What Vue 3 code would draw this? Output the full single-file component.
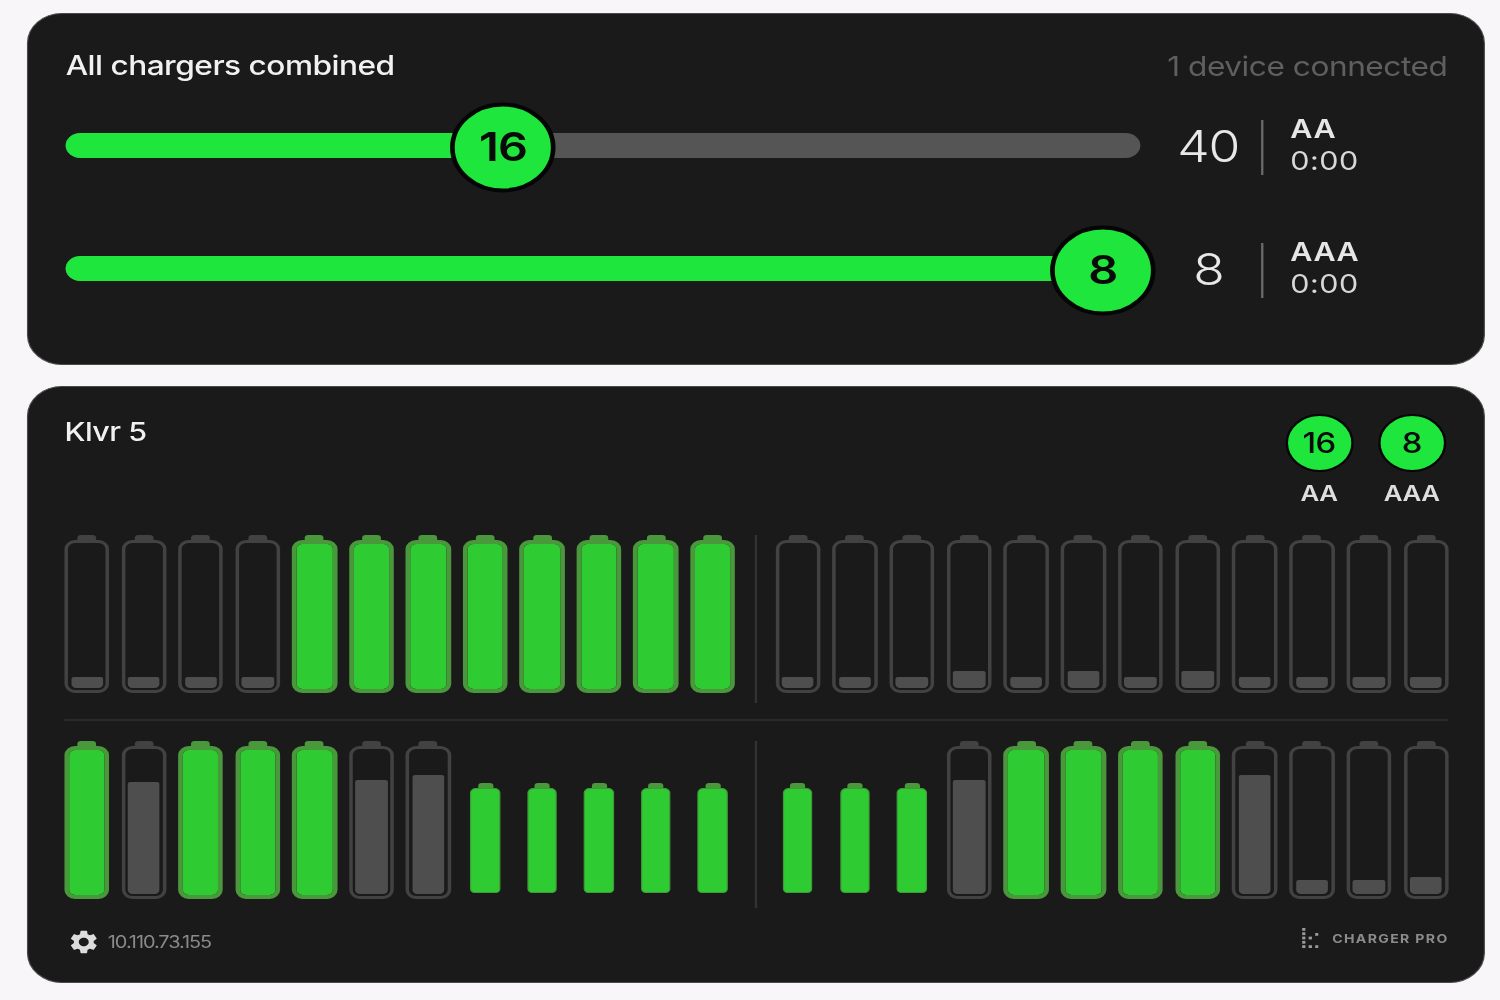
<script setup>
const F = 'full'
const S = 'small'
const sliders = [
  { value: 16, total: 40, pos: 40.7, label: 'AA', time: '0:00' },
  { value: 8, total: 8, pos: 96.5, label: 'AAA', time: '0:00' },
]
const rows = [
  {
    left: [11, 11, 11, 11, F, F, F, F, F, F, F, F],
    right: [11, 11, 11, 17, 11, 17, 11, 17, 11, 11, 11, 11],
  },
  {
    left: [F, 112, F, F, F, 114, 119, S, S, S, S, S],
    right: [S, S, S, 114, F, F, F, F, 119, 14, 14, 17],
  },
]
const counts = [
  { value: 16, label: 'AA' },
  { value: 8, label: 'AAA' },
]
const dots = [
  [0, 0], [0, 4.3], [0, 8.6], [0, 12.9], [0, 17.2],
  [5.6, 8.6], [5.6, 17.2], [11.2, 5], [11.2, 17.2],
]
</script>

<template>
  <div class="stage">
    <section class="card combined">
      <header class="head">
        <h2 class="title">All chargers combined</h2>
        <span class="status">1 device connected</span>
      </header>
      <div class="sliders">
        <div v-for="s in sliders" :key="s.label" class="slider-row">
          <div class="track">
            <div class="track-fill" :style="{ width: s.pos + '%' }"></div>
            <div class="thumb" :style="{ left: s.pos + '%' }">{{ s.value }}</div>
          </div>
          <div class="total">{{ s.total }}</div>
          <div class="rule"></div>
          <div class="meta">
            <strong>{{ s.label }}</strong>
            <span>{{ s.time }}</span>
          </div>
        </div>
      </div>
    </section>

    <section class="card device">
      <header class="device-head">
        <h2 class="title device-name">Klvr 5</h2>
        <div class="counts">
          <div v-for="c in counts" :key="c.label" class="count">
            <div class="pill">{{ c.value }}</div>
            <div class="pill-label">{{ c.label }}</div>
          </div>
        </div>
      </header>

      <div v-for="(row, r) in rows" :key="r" class="bank" :class="{ lower: r === 1 }">
        <template v-for="(side, k) in [row.left, row.right]" :key="k">
          <div v-if="k === 1" class="bank-rule"></div>
          <div class="cells">
            <div v-for="(b, i) in side" :key="i" class="cell">
              <div v-if="b === S" class="battery small"></div>
              <div v-else-if="b === F" class="battery full"></div>
              <div v-else class="battery">
                <div class="charge" :style="{ height: b + 'px' }"></div>
              </div>
            </div>
          </div>
        </template>
      </div>

      <footer class="foot">
        <div class="address">
          <svg class="gear" viewBox="2.4 1.8 19.2 20.4" aria-hidden="true">
            <path fill="#dcdcdc" d="M19.14 12.94c.04-.3.06-.61.06-.94 0-.32-.02-.64-.07-.94l2.03-1.58c.18-.14.23-.41.12-.61l-1.92-3.32c-.12-.22-.37-.29-.59-.22l-2.39.96c-.5-.38-1.03-.7-1.62-.94l-.36-2.54c-.04-.24-.24-.41-.48-.41h-3.84c-.24 0-.43.17-.47.41l-.36 2.54c-.59.24-1.13.57-1.62.94l-2.39-.96c-.22-.08-.47 0-.59.22L2.74 8.87c-.12.21-.08.47.12.61l2.03 1.58c-.05.3-.09.63-.09.94s.02.64.07.94l-2.03 1.58c-.18.14-.23.41-.12.61l1.92 3.32c.12.22.37.29.59.22l2.39-.96c.5.38 1.03.7 1.62.94l.36 2.54c.05.24.24.41.48.41h3.84c.24 0 .44-.17.47-.41l.36-2.54c.59-.24 1.13-.56 1.62-.94l2.39.96c.22.08.47 0 .59-.22l1.92-3.32c.12-.22.07-.47-.12-.61l-2.01-1.58zM12 15.6c-1.98 0-3.6-1.62-3.6-3.6s1.62-3.6 3.6-3.6 3.6 1.62 3.6 3.6-1.62 3.6-3.6 3.6z" />
          </svg>
          <span>10.110.73.155</span>
        </div>
        <div class="brand">
          <svg class="mark" viewBox="0 0 14 20" aria-hidden="true">
            <rect v-for="(d, i) in dots" :key="i" :x="d[0]" :y="d[1]" width="2.8" height="2.8" fill="#9a9a9a" />
          </svg>
          <span>CHARGER PRO</span>
        </div>
      </footer>
    </section>
  </div>
</template>

<style scoped>
.stage {
  box-sizing: border-box;
  width: 1280px;
  padding: 13px 13px 0 23px;
  display: flex;
  flex-direction: column;
  gap: 21px;
  transform: scaleX(1.172);
  transform-origin: 0 0;
  font-family: Inter, "Liberation Sans", sans-serif;
  color: #f1f1f1;
  filter: blur(0.6px);
}
.card {
  box-sizing: border-box;
  width: 1244px;
  background: #1a1a1a;
  border: 1px solid #4a4a4a;
  border-radius: 30px;
  padding-left: 32px;
  padding-right: 31px;
}
.combined {
  height: 352px;
  padding-top: 35px;
}
.head {
  display: flex;
  justify-content: space-between;
  align-items: center;
  height: 34px;
  margin-bottom: 18px;
}
.title {
  margin: 0;
  font-size: 27px;
  font-weight: 500;
  letter-spacing: -0.44px;
  line-height: 34px;
  color: #f1f1f1;
}
.status {
  font-size: 27px;
  letter-spacing: -0.4px;
  color: #5f5f5f;
}
.sliders {
  display: flex;
  flex-direction: column;
  gap: 33px;
}
.slider-row {
  display: flex;
  align-items: center;
  height: 90px;
}
.track {
  position: relative;
  width: 917px;
  height: 25px;
  margin-top: -2px;
  border-radius: 13px;
  background: #555;
}
.track-fill {
  height: 100%;
  border-radius: 13px 0 0 13px;
  background: #1fe63c;
}
.thumb {
  position: absolute;
  top: 50%;
  box-sizing: border-box;
  width: 90px;
  height: 90px;
  display: flex;
  align-items: center;
  justify-content: center;
  border: 4px solid #050505;
  border-radius: 50%;
  background: #1fe63c;
  color: #0a0a0a;
  font-size: 40px;
  font-weight: 600;
  letter-spacing: -0.8px;
  line-height: 80px;
  padding-bottom: 2px;
  transform: translate(-50%, calc(-50% + 2.5px));
}
.total {
  width: 88px;
  margin-left: 14px;
  margin-right: 1px;
  text-align: center;
  font-size: 44px;
  font-weight: 300;
  letter-spacing: -1px;
  color: #e8e8e8;
}
.rule {
  width: 2px;
  height: 55px;
  margin-top: 2px;
  background: #6a6a6a;
}
.meta {
  display: flex;
  flex-direction: column;
  margin-left: 23px;
  margin-top: -3px;
  font-size: 26px;
  line-height: 31.5px;
  color: #d8d8d8;
  letter-spacing: 0.4px;
}
.meta strong {
  font-weight: 600;
  color: #e6e6e6;
}
.device {
  height: 597px;
  padding-top: 27px;
  padding-left: 31px;
  padding-right: 30px;
}
.device-head {
  display: flex;
  justify-content: space-between;
  align-items: flex-start;
  height: 91px;
  margin-bottom: 30px;
}
.device-name {
  font-size: 26px;
  line-height: 36px;
}
.counts {
  display: flex;
  gap: 21px;
  margin-right: 2.5px;
}
.count {
  width: 58px;
  display: flex;
  flex-direction: column;
  align-items: center;
}
.pill {
  box-sizing: border-box;
  width: 58px;
  height: 58px;
  display: flex;
  align-items: center;
  justify-content: center;
  border: 2px solid #050505;
  border-radius: 50%;
  background: #1fe63c;
  color: #0a0a0a;
  font-size: 28px;
  font-weight: 500;
  letter-spacing: -0.5px;
}
.pill-label {
  margin-top: 8px;
  font-size: 22px;
  font-weight: 600;
  line-height: 27px;
  color: #dedede;
  letter-spacing: -0.3px;
}
.bank {
  display: grid;
  grid-template-columns: 572.5px 1px 1fr;
  column-gap: 16.5px;
  height: 168px;
  padding-bottom: 16px;
  border-bottom: 2px solid #2b2b2b;
  box-sizing: content-box;
}
.bank.lower {
  height: 167px;
  margin-top: 20px;
  padding-bottom: 0;
  border-bottom: 0;
}
.bank-rule {
  background: #333;
  width: 2px;
}
.cells {
  display: grid;
  grid-template-columns: repeat(12, 38.4px);
  justify-content: space-between;
  align-items: start;
}
.cell {
  position: relative;
  height: 158px;
  display: flex;
  justify-content: center;
  align-items: flex-end;
}
.battery {
  position: relative;
  box-sizing: border-box;
  width: 38.4px;
  height: 153px;
  border: 3px solid #424242;
  border-radius: 9px;
}
.battery::before {
  content: "";
  position: absolute;
  top: -8px;
  left: 50%;
  width: 16px;
  height: 5px;
  margin-left: -8px;
  border-radius: 3px 3px 0 0;
  background: #424242;
}
.charge {
  position: absolute;
  left: 2.5px;
  right: 2.5px;
  bottom: 2px;
  border-radius: 2px 2px 4px 4px;
  background: #4e4e4e;
}
.battery.full {
  border: 4px solid #4a983c;
  background: #2ecb33;
  background-clip: padding-box;
}
.battery.full::before {
  top: -9px;
  background: #4a983c;
}
.battery.small {
  width: 25.6px;
  height: 105px;
  margin-bottom: 6px;
  border: 1px solid #3f9a38;
  border-radius: 5px 5px 4px 4px;
  background: #2ecb33;
}
.battery.small::before {
  top: -6px;
  width: 13px;
  margin-left: -6.5px;
  background: #4a983c;
}
.foot {
  display: flex;
  justify-content: space-between;
  align-items: center;
  height: 28px;
  margin-top: 20px;
}
.address {
  display: flex;
  align-items: center;
  gap: 9px;
  padding-left: 5px;
  font-size: 17px;
  letter-spacing: -0.9px;
  color: #8a8a8a;
}
.gear {
  width: 23px;
  height: 24px;
}
.brand {
  display: flex;
  align-items: center;
  gap: 12px;
  margin-top: -8px;
  font-size: 12px;
  font-weight: 700;
  letter-spacing: 1.15px;
  color: #8c8c8c;
}
.mark {
  width: 14px;
  height: 20px;
}
</style>

<style>
html,
body {
  background: #f8f6f8;
}
body {
  overflow: hidden;
}
</style>
